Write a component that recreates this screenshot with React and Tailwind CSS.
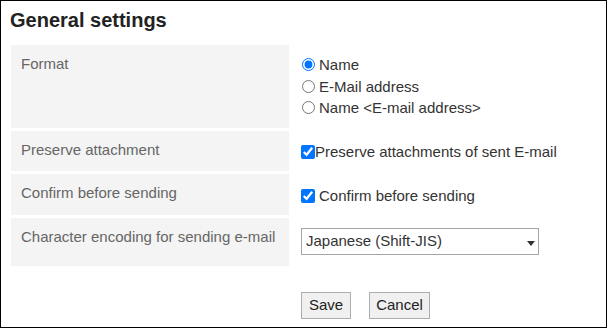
import { useState } from "react";

// Formato del mittente: tre opzioni mutuamente esclusive.
const FORMATS = ["Name", "E-Mail address", "Name <E-mail address>"];

function Label({ children }) {
  return (
    <div className="bg-[#f4f4f4] pl-[10px] pt-[8px] text-[15px] leading-[21px] text-[#666]">
      {children}
    </div>
  );
}

export default function App() {
  const [format, setFormat] = useState("Name");
  const [preserve, setPreserve] = useState(true);
  const [confirm, setConfirm] = useState(true);

  return (
    <div className="h-[328px] w-[607px] border border-black bg-white font-['Liberation_Sans',Arial,sans-serif] text-[#333]">
      <h1 className="pl-[9px] pt-[8px] text-[20px] font-bold leading-[23px] text-[#222]">
        General settings
      </h1>

      <div className="ml-[10px] mt-[13px] grid grid-cols-[278px_1fr] grid-rows-[83px_40px_41px_48px] gap-[3px]">
        <Label>Format</Label>
        <div className="flex flex-col pl-[10px] pt-[9px] text-[15px] leading-[21.5px]">
          {FORMATS.map((f) => (
            <label key={f} className="flex items-center gap-[4px]">
              <input
                type="radio"
                name="format"
                checked={format === f}
                onChange={() => setFormat(f)}
                className="m-0 h-[13px] w-[13px]"
              />
              {f}
            </label>
          ))}
        </div>

        <Label>Preserve attachment</Label>
        <div className="flex items-start pl-[9px] pt-[10px] text-[15px] leading-[22px]">
          <label className="flex items-center">
            <input
              type="checkbox"
              checked={preserve}
              onChange={(e) => setPreserve(e.target.checked)}
              className="m-0 h-[14px] w-[14px]"
            />
            Preserve attachments of sent E-mail
          </label>
        </div>

        <Label>Confirm before sending</Label>
        <div className="flex items-start pl-[9px] pt-[11px] text-[15px] leading-[22px]">
          <label className="flex items-center gap-[4px]">
            <input
              type="checkbox"
              checked={confirm}
              onChange={(e) => setConfirm(e.target.checked)}
              className="m-0 h-[14px] w-[14px]"
            />
            Confirm before sending
          </label>
        </div>

        <Label>Character encoding for sending e-mail</Label>
        <div className="pl-[9px] pt-[10px]">
          <div className="relative w-[238px]">
            <select className="h-[27px] w-full appearance-none border border-[#a6a6a6] bg-white pl-[4px] text-[15px] text-[#333] outline-none">
              <option>Japanese (Shift-JIS)</option>
              <option>Unicode (UTF-8)</option>
            </select>
            <svg
              className="pointer-events-none absolute right-[4px] top-[13px]"
              width="8"
              height="5"
              viewBox="0 0 8 5"
            >
              <path d="M0 0h8L4 5z" fill="#333" />
            </svg>
          </div>
        </div>

        <div />
        <div className="flex gap-[18px] pl-[9px] pt-[23px]">
          <button className="h-[27px] w-[50px] border border-[#adadad] bg-[#f0f0f0] text-[15px] text-[#222]">
            Save
          </button>
          <button className="h-[27px] w-[61px] border border-[#adadad] bg-[#f0f0f0] text-[15px] text-[#222]">
            Cancel
          </button>
        </div>
      </div>
    </div>
  );
}
